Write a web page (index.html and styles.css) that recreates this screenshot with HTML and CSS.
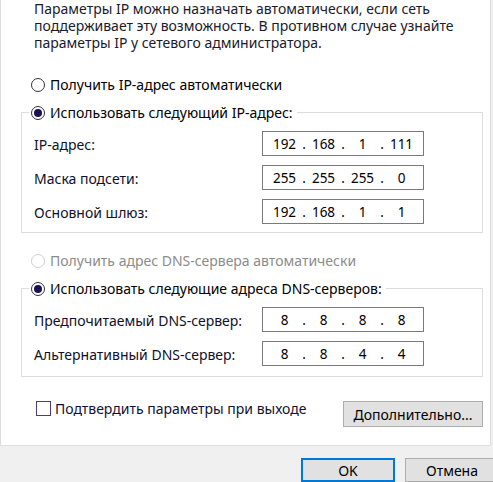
FILE: index.html
```html
<!DOCTYPE html>
<html lang="ru">
<head>
<meta charset="utf-8">
<link rel="stylesheet" href="styles.css">
</head>
<body>
<div class="panel">
  <p class="intro">Параметры IP можно назначать автоматически, если сеть<br>поддерживает эту возможность. В противном случае узнайте<br>параметры IP у сетевого администратора.</p>

  <div class="opt opt-first"><span class="radio"></span><span>Получить IP-адрес автоматически</span></div>

  <fieldset class="group">
    <legend class="opt"><span class="radio checked"></span><span>Использовать следующий IP-адрес:</span></legend>
    <div class="row"><span class="lbl">IP-адрес:</span>
      <div class="ip"><span class="f">192</span><span class="d">.</span><span class="f">168</span><span class="d">.</span><span class="f">1</span><span class="d">.</span><span class="f">111</span></div></div>
    <div class="row"><span class="lbl">Маска подсети:</span>
      <div class="ip"><span class="f">255</span><span class="d">.</span><span class="f">255</span><span class="d">.</span><span class="f">255</span><span class="d">.</span><span class="f">0</span></div></div>
    <div class="row"><span class="lbl">Основной шлюз:</span>
      <div class="ip"><span class="f">192</span><span class="d">.</span><span class="f">168</span><span class="d">.</span><span class="f">1</span><span class="d">.</span><span class="f">1</span></div></div>
  </fieldset>

  <div class="opt opt-disabled"><span class="radio"></span><span>Получить адрес DNS-сервера автоматически</span></div>

  <fieldset class="group group-dns">
    <legend class="opt"><span class="radio checked"></span><span>Использовать следующие адреса DNS-серверов:</span></legend>
    <div class="row"><span class="lbl">Предпочитаемый DNS-сервер:</span>
      <div class="ip"><span class="f">8</span><span class="d">.</span><span class="f">8</span><span class="d">.</span><span class="f">8</span><span class="d">.</span><span class="f">8</span></div></div>
    <div class="row"><span class="lbl">Альтернативный DNS-сервер:</span>
      <div class="ip"><span class="f">8</span><span class="d">.</span><span class="f">8</span><span class="d">.</span><span class="f">4</span><span class="d">.</span><span class="f">4</span></div></div>
  </fieldset>

  <div class="bottom">
    <label class="check"><span class="box"></span><span>Подтвердить параметры при выходе</span></label>
    <button class="btn btn-adv">Дополнительно...</button>
  </div>
</div>
<div class="footer">
  <button class="btn btn-ok">OK</button>
  <button class="btn btn-cancel">Отмена</button>
</div>
</body>
</html>
```
FILE: styles.css
```css
html, body {
  margin: 0;
  padding: 0;
}
body {
  width: 493px;
  height: 482px;
  overflow: hidden;
  background: #f0f0f0;
  font-family: "Noto Sans", "Open Sans", sans-serif;
  font-size: 14px;
  color: #000;
}
.panel {
  box-sizing: border-box;
  width: 491px;
  height: 446px;
  background: #fff;
  border-left: 1px solid #dcdcdc;
  border-right: 1px solid #dcdcdc;
  border-bottom: 1px solid #dfdfdf;
  display: flex;
  flex-direction: column;
  align-items: flex-start;
}
.intro {
  margin: 0 0 0 33px;
  line-height: 17px;
  color: #1a1a2a;
}
.opt {
  display: flex;
  align-items: center;
  gap: 5px;
  line-height: 17px;
  height: 17px;
}
.opt-first {
  margin: 25px 0 0 30px;
}
.opt-disabled {
  margin: 19px 0 0 30px;
  color: #8c8c8c;
}
.opt-disabled .radio {
  border-color: #cfcfcf;
}
.radio {
  box-sizing: border-box;
  width: 14px;
  height: 14px;
  border: 1px solid #333;
  border-radius: 50%;
  background: #fff;
  display: flex;
  align-items: center;
  justify-content: center;
  flex: none;
}
.radio.checked::after {
  content: "";
  width: 8px;
  height: 8px;
  border-radius: 50%;
  background: #1c1150;
}
.group {
  box-sizing: border-box;
  width: 462px;
  margin: 11px 0 0 20px;
  padding: 10px 0 8px 12px;
  border: 1px solid #dcdcdc;
  display: flex;
  flex-direction: column;
  gap: 9px;
}
.group legend {
  margin-left: -5px;
  padding: 0 4px 0 2px;
}
.group-dns {
  padding-bottom: 10px;
}
.row {
  display: flex;
  align-items: center;
  height: 25px;
}
.lbl {
  width: 228px;
  padding-top: 2px;
  color: #10102a;
}
.ip {
  box-sizing: border-box;
  width: 162px;
  height: 25px;
  border: 1px solid #7a7a7a;
  padding-left: 6px;
  display: flex;
  align-items: center;
  font-size: 13.5px;
}
.ip .f {
  width: 31px;
  text-align: center;
}
.ip .d {
  width: 8px;
  text-align: center;
}
.bottom {
  display: flex;
  align-items: flex-start;
  justify-content: space-between;
  width: 447px;
  margin: 24px 0 0 35px;
  box-sizing: border-box;
}
.check {
  display: flex;
  align-items: center;
  gap: 4px;
  height: 15px;
  line-height: 15px;
  color: #111133;
}
.box {
  box-sizing: border-box;
  width: 15px;
  height: 15px;
  border: 1px solid #4b3a85;
  background: #fff;
  flex: none;
}
.btn {
  box-sizing: border-box;
  font-family: inherit;
  font-size: 14px;
  color: #000;
  background: #e1e1e1;
  border: 1px solid #adadad;
  padding: 0;
  margin: 0;
  flex: none;
}
.btn-adv {
  width: 140px;
  height: 26px;
}
.footer {
  display: flex;
  gap: 10px;
  padding: 12px 0 0 301px;
}
.btn-ok {
  width: 94px;
  height: 24px;
  border: 2px solid #0078d7;
}
.btn-cancel {
  width: 94px;
  height: 24px;
}
```
